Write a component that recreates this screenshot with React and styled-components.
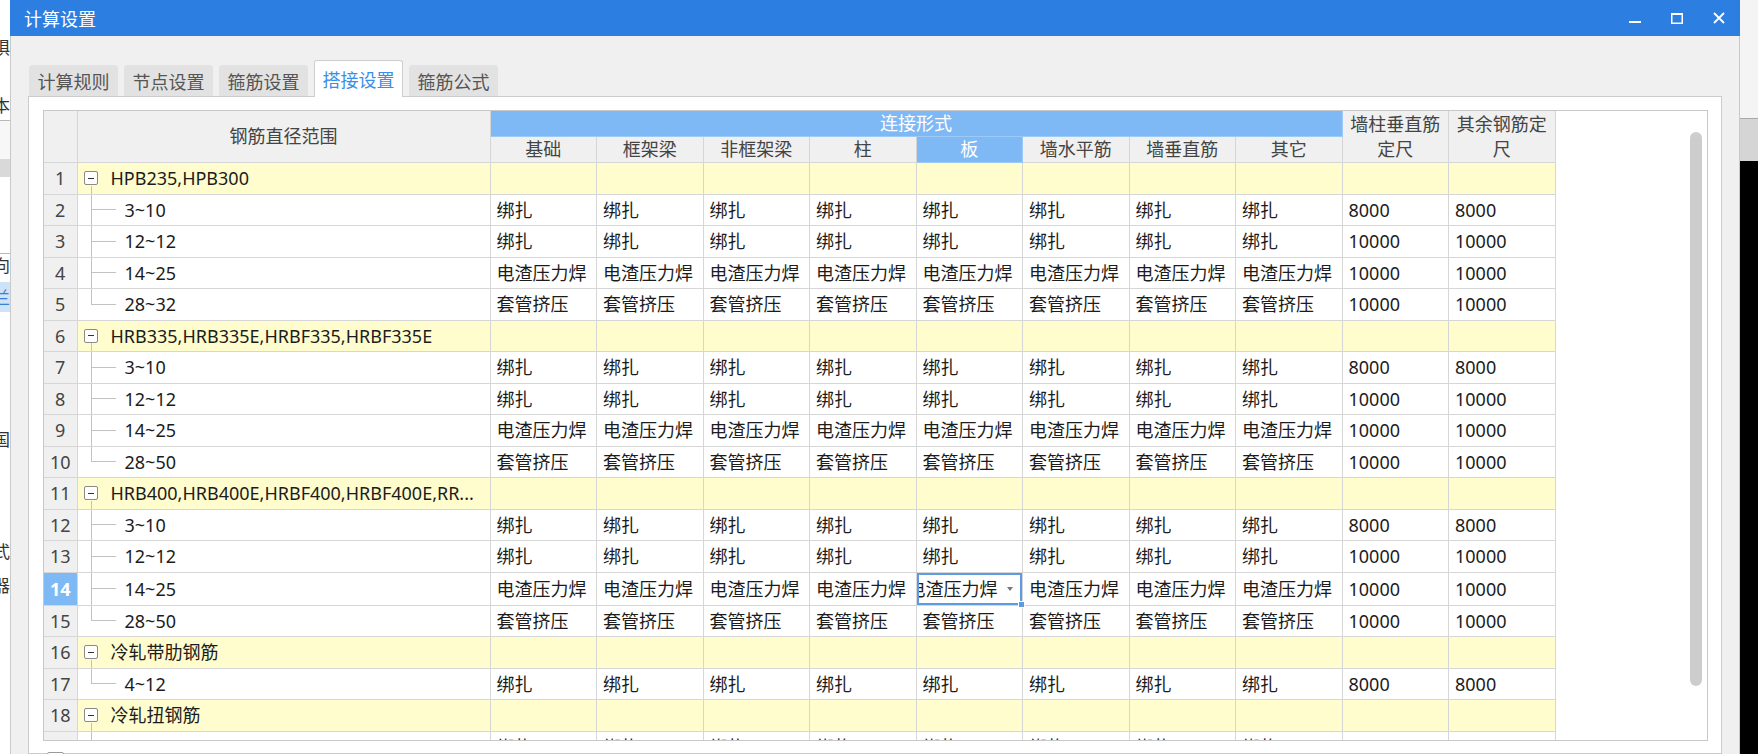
import React from 'react';
import styled, { createGlobalStyle, css } from 'styled-components';

const GlobalStyle = createGlobalStyle`
  html, body {
    margin: 0;
    padding: 0;
    height: 100%;
    overflow: hidden;
    background: #fff;
  }
  body {
    font-family: "Noto Sans", "Noto Sans CJK SC", sans-serif;
  }
`;

const BLUE = '#7fb9f5';
const LINE = '#d6d6d6';
const TREE = '#c2c2c2';

const Screen = styled.div`
    display: flex;
    width: 1758px;
    height: 754px;
    overflow: hidden;
`;

/* fragments of the application behind the dialog */
const BackLeft = styled.div`
    width: 10px;
    flex-shrink: 0;
    background: #fff;
    display: flex;
    flex-direction: column;
    overflow: hidden;
`;

const BackItem = styled.div`
    height: ${props => props.$h}px;
    flex-shrink: 0;
    display: flex;
    justify-content: flex-end;
    align-items: center;
    background: ${props => props.$bg || 'transparent'};
    border-bottom: ${props => props.$line ? '1px solid #b8b8b8' : 'none'};
    color: ${props => props.$color || '#333'};
    font-size: 17px;
    line-height: 1;
    white-space: nowrap;
`;

const BackRight = styled.div`
    width: 18px;
    flex-shrink: 0;
    display: flex;
    flex-direction: column;
`;

const BackBand = styled.div`
    height: ${props => props.$h ? `${props.$h}px` : 'auto'};
    flex: ${props => props.$h ? '0 0 auto' : '1'};
    background: ${props => props.$bg};
    border-bottom: ${props => props.$line ? '1px solid #a9a9a9' : 'none'};
`;

/* dialog */
const Window = styled.div`
    width: 1730px;
    flex-shrink: 0;
    display: flex;
    flex-direction: column;
`;

const TitleBar = styled.div`
    height: 36px;
    flex-shrink: 0;
    background: #2c7ee0;
    color: #fff;
    display: flex;
    align-items: center;
    padding-left: 14px;
    font-size: 18px;
`;

const Controls = styled.div`
    margin-left: auto;
    display: flex;
    height: 100%;
`;

const ControlButton = styled.div`
    width: 42px;
    height: 100%;
    display: flex;
    align-items: center;
    justify-content: center;
`;

const Body = styled.div`
    flex: 1;
    display: flex;
    flex-direction: column;
    background: #f0f0f0;
    border-left: 1px solid #c9c9c9;
    border-right: 1px solid #c9c9c9;
    padding: 24px 17px 0 17px;
    min-height: 0;
`;

const TabBar = styled.div`
    display: flex;
    align-items: flex-end;
    gap: 6px;
    padding-left: 1px;
    height: 37px;
    margin-bottom: -1px;
    position: relative;
    z-index: 1;
`;

const Tab = styled.div`
    box-sizing: border-box;
    height: ${props => props.$active ? '37px' : '31px'};
    margin-bottom: ${props => props.$active ? '0' : '1px'};
    padding: 0 7.5px;
    display: flex;
    align-items: center;
    font-size: 18px;
    border-radius: 3px 3px 0 0;
    color: ${props => props.$active ? '#3a8ee8' : '#555'};
    background: ${props => props.$active ? '#fff' : '#e2e2e2'};
    border: 1px solid ${props => props.$active ? '#cfcfcf' : '#e2e2e2'};
    border-bottom: ${props => props.$active ? 'none' : '1px solid #e2e2e2'};
`;

const Panel = styled.div`
    flex: 1;
    background: #fff;
    border: 1px solid #cccccc;
    padding: 13px 13px 0 14px;
    min-height: 0;
`;

const Grid = styled.div`
    box-sizing: border-box;
    height: 631px;
    border: 1px solid #c8c8c8;
    display: flex;
    background: #fff;
`;

const TableArea = styled.div`
    flex: 1;
    overflow: hidden;
`;

const Table = styled.table`
    border-collapse: collapse;
    table-layout: fixed;
    width: 1511px;
    font-size: 18px;
`;

const HeadRow = styled.tr`
    height: 25.5px;
`;

const HeadCell = styled.th`
    padding: 0 2px;
    font-weight: normal;
    text-align: center;
    line-height: 25px;
    color: ${props => props.$blue ? '#fff' : '#444'};
    background: ${props => props.$blue ? BLUE : '#f0f0f0'};
    border-right: 1px solid ${props => props.$blue ? '#9ccaf7' : LINE};
    border-bottom: 1px solid ${props => props.$blue ? '#9ccaf7' : LINE};
`;

const Row = styled.tr`
    height: 31.5px;
    background: ${props => props.$group ? '#fffdcd' : '#fff'};
`;

const cellBase = css`
    border-right: 1px solid ${LINE};
    border-bottom: 1px solid ${LINE};
    white-space: nowrap;
    overflow: hidden;
    line-height: 1;
    color: #1c1c1c;
`;

const NumCell = styled.td`
    ${cellBase}
    padding: 0;
    text-align: center;
    color: ${props => props.$active ? '#fff' : '#444'};
    font-weight: ${props => props.$active ? 700 : 400};
    background: ${props => props.$active ? BLUE : '#f0f0f0'};
`;

const GroupNameCell = styled.td`
    ${cellBase}
    padding: 0 0 0 6px;
    background: linear-gradient(${TREE}, ${TREE}) 13px 100% / 1px 8px no-repeat;
`;

const GroupLabel = styled.div`
    display: flex;
    align-items: center;
    gap: 13px;
`;

const Expander = styled.span`
    box-sizing: border-box;
    width: 14px;
    height: 14px;
    flex-shrink: 0;
    border: 1px solid #8a8a8a;
    border-radius: 2px;
    background: #fff;
    display: flex;
    align-items: center;
    justify-content: center;

    &::after {
        content: '';
        width: 6px;
        height: 1px;
        background: #333;
    }
`;

const ChildNameCell = styled.td`
    ${cellBase}
    padding: 0 0 0 47px;
    background:
        linear-gradient(${TREE}, ${TREE}) 13px 0 / 1px ${props => props.$last ? '50%' : '100%'} no-repeat,
        linear-gradient(${TREE}, ${TREE}) 13px 50% / 25px 1px no-repeat;
`;

const Cell = styled.td`
    ${cellBase}
    padding: 0 6px;
`;

const EditCell = styled.td`
    ${cellBase}
    padding: 0;
    position: relative;
    overflow: visible;
`;

const Editor = styled.div`
    box-sizing: border-box;
    height: 32px;
    border: 2px solid #5c9be0;
    display: flex;
    align-items: center;
    overflow: hidden;
`;

const EditorText = styled.span`
    margin-left: -11px;
    flex-shrink: 0;
`;

const Caret = styled.span`
    margin-left: 9px;
    width: 0;
    height: 0;
    border-left: 3px solid transparent;
    border-right: 3px solid transparent;
    border-top: 4px solid #777;
    flex-shrink: 0;
`;

const Handle = styled.span`
    position: absolute;
    right: -3px;
    bottom: -3px;
    width: 5px;
    height: 5px;
    background: #5c9be0;
    border: 1px solid #fff;
    z-index: 2;
`;

const ScrollTrack = styled.div`
    width: 17px;
    flex-shrink: 0;
    padding-top: 21px;
`;

const Thumb = styled.div`
    width: 12px;
    height: 554px;
    border-radius: 6px;
    background: #cdcdcd;
`;

const CheckRow = styled.div`
    margin-top: 11px;
    padding-left: 4px;
`;

const CheckBox = styled.span`
    display: block;
    box-sizing: border-box;
    width: 17px;
    height: 17px;
    border: 1px solid #9a9a9a;
    border-radius: 2px;
    background: #fff;
`;

const columns = ['基础', '框架梁', '非框架梁', '柱', '板', '墙水平筋', '墙垂直筋', '其它'];

const groups = [
    {
        name: 'HPB235,HPB300',
        rows: [['3~10', '绑扎', 8000], ['12~12', '绑扎', 10000], ['14~25', '电渣压力焊', 10000], ['28~32', '套管挤压', 10000]],
    },
    {
        name: 'HRB335,HRB335E,HRBF335,HRBF335E',
        rows: [['3~10', '绑扎', 8000], ['12~12', '绑扎', 10000], ['14~25', '电渣压力焊', 10000], ['28~50', '套管挤压', 10000]],
    },
    {
        name: 'HRB400,HRB400E,HRBF400,HRBF400E,RR...',
        rows: [['3~10', '绑扎', 8000], ['12~12', '绑扎', 10000], ['14~25', '电渣压力焊', 10000], ['28~50', '套管挤压', 10000]],
    },
    { name: '冷轧带肋钢筋', rows: [['4~12', '绑扎', 8000]] },
    { name: '冷轧扭钢筋', rows: [['6.5~14', '绑扎', 8000]] },
];

const ACTIVE_ROW = 14;
const ACTIVE_COL = 4;

const tabs = ['计算规则', '节点设置', '箍筋设置', '搭接设置', '箍筋公式'];

const backItems = [
    { h: 36 }, { h: 22, t: '惧' }, { h: 36 }, { h: 22, t: '本' }, { h: 4, line: true },
    { h: 38, bg: '#f7f7f7' }, { h: 18, bg: '#d9d9d9' }, { h: 76, line: true },
    { h: 22, t: '向' }, { h: 6 }, { h: 30, t: '兰', bg: '#cde3f7', color: '#3a7fd0' },
    { h: 116 }, { h: 22, t: '国' }, { h: 90 }, { h: 22, t: '式' }, { h: 12 }, { h: 22, t: '器' },
];

const App = () => {
    let n = 0;
    const body = [];
    groups.forEach((g) => {
        n += 1;
        body.push(
            <Row key={`g${n}`} $group>
                <NumCell $active={n === ACTIVE_ROW}>{n}</NumCell>
                <GroupNameCell>
                    <GroupLabel><Expander />{g.name}</GroupLabel>
                </GroupNameCell>
                {[...Array(10)].map((_, i) => <Cell key={i} />)}
            </Row>
        );
        g.rows.forEach(([range, method, len], ri) => {
            n += 1;
            const rowNo = n;
            body.push(
                <Row key={`r${rowNo}`}>
                    <NumCell $active={rowNo === ACTIVE_ROW}>{rowNo}</NumCell>
                    <ChildNameCell $last={ri === g.rows.length - 1}>{range}</ChildNameCell>
                    {columns.map((c, ci) => (
                        rowNo === ACTIVE_ROW && ci === ACTIVE_COL ? (
                            <EditCell key={c}>
                                <Editor>
                                    <EditorText>{method}</EditorText>
                                    <Caret />
                                </Editor>
                                <Handle />
                            </EditCell>
                        ) : (
                            <Cell key={c}>{method}</Cell>
                        )
                    ))}
                    <Cell>{len}</Cell>
                    <Cell>{len}</Cell>
                </Row>
            );
        });
    });

    return (
        <Screen>
            <GlobalStyle />
            <BackLeft>
                {backItems.map((b, i) => (
                    <BackItem key={i} $h={b.h} $bg={b.bg} $line={b.line} $color={b.color}>{b.t}</BackItem>
                ))}
            </BackLeft>
            <Window>
                <TitleBar>
                    计算设置
                    <Controls>
                        <ControlButton>
                            <svg width="12" height="12" viewBox="0 0 12 12"><rect x="0" y="9" width="12" height="2" fill="#fff" /></svg>
                        </ControlButton>
                        <ControlButton>
                            <svg width="12" height="12" viewBox="0 0 12 12">
                                <rect x="0.75" y="1.75" width="10.5" height="9.5" fill="none" stroke="#fff" strokeWidth="1.5" />
                                <rect x="0" y="1" width="12" height="2" fill="#fff" />
                            </svg>
                        </ControlButton>
                        <ControlButton>
                            <svg width="12" height="12" viewBox="0 0 12 12">
                                <path d="M1 1 L11 11 M11 1 L1 11" stroke="#fff" strokeWidth="1.8" />
                            </svg>
                        </ControlButton>
                    </Controls>
                </TitleBar>
                <Body>
                    <TabBar>
                        {tabs.map((t, i) => <Tab key={t} $active={i === 3}>{t}</Tab>)}
                    </TabBar>
                    <Panel>
                        <Grid>
                            <TableArea>
                                <Table>
                                    <colgroup>
                                        <col style={{ width: 33 }} />
                                        <col style={{ width: 413 }} />
                                        {[...Array(10)].map((_, i) => <col key={i} style={{ width: 106.5 }} />)}
                                    </colgroup>
                                    <thead>
                                        <HeadRow>
                                            <HeadCell rowSpan={2} />
                                            <HeadCell rowSpan={2}>钢筋直径范围</HeadCell>
                                            <HeadCell colSpan={8} $blue>连接形式</HeadCell>
                                            <HeadCell rowSpan={2}>墙柱垂直筋定尺</HeadCell>
                                            <HeadCell rowSpan={2}>其余钢筋定尺</HeadCell>
                                        </HeadRow>
                                        <HeadRow>
                                            {columns.map((c, i) => <HeadCell key={c} $blue={i === ACTIVE_COL}>{c}</HeadCell>)}
                                        </HeadRow>
                                    </thead>
                                    <tbody>{body}</tbody>
                                </Table>
                            </TableArea>
                            <ScrollTrack><Thumb /></ScrollTrack>
                        </Grid>
                        <CheckRow><CheckBox /></CheckRow>
                    </Panel>
                </Body>
            </Window>
            <BackRight>
                <BackBand $h={118} $bg="#f4f4f4" $line />
                <BackBand $h={42} $bg="#d5d5d5" />
                <BackBand $bg="#000" />
            </BackRight>
        </Screen>
    );
};

export default App;
